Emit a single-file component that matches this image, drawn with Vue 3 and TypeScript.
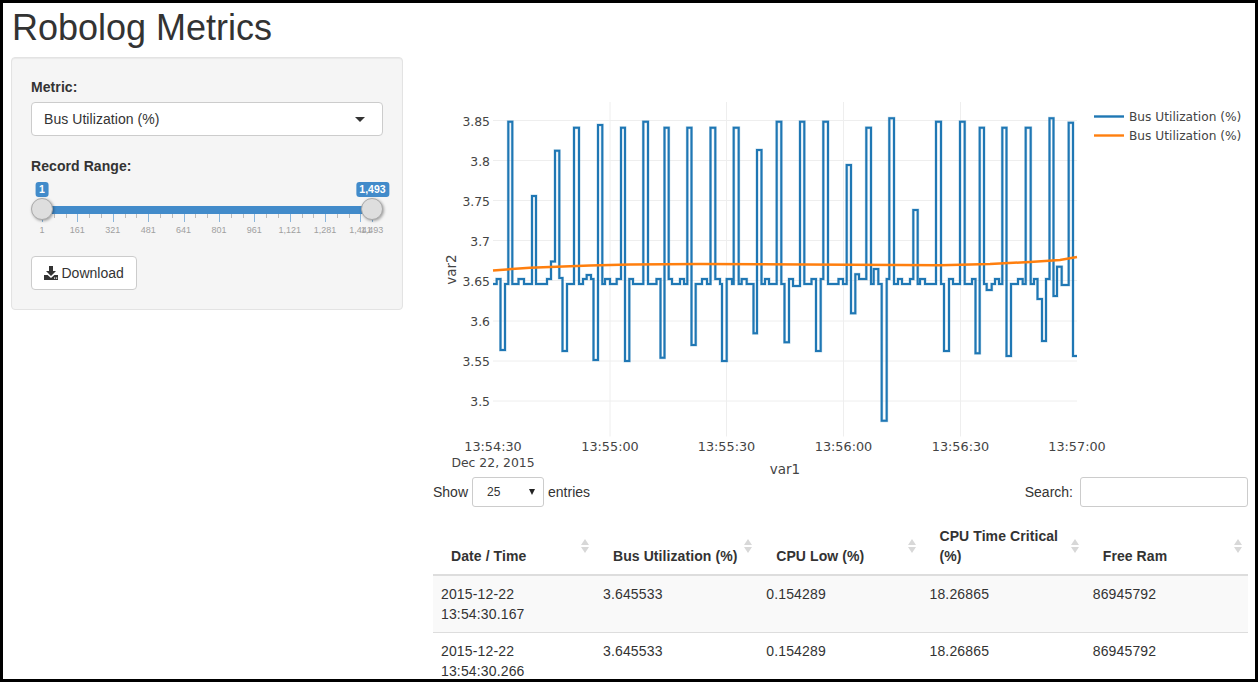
<script setup lang="ts">
// [x, level] pairs read off the chart, each one is a step of the blue trace
const steps: [number, number][] = [
  [496.7,279],[500.5,350],[505,284],[508.3,121.7],[512.3,284],[518.5,279],[524,284],[532,196],[536,284],
  [547,279],[551,261.6],[555,150.7],[559.3,278],[562.5,351],[567,284],[574,127.7],[579,284],[583,279],
  [586.7,275],[591,279],[593.5,360],[598,125],[602.3,284],[605,279],[610,284],[616.7,279],[621,127.7],
  [625,361],[629.3,279],[633,284],[643.3,121.7],[648,284],[656.5,279],[660.5,357.7],[664.5,127.7],
  [668.7,279],[672,284],[680,279],[684,284],[687.3,127.7],[691.5,345],[695.7,284],[702,279],[707,284],
  [710.5,127.7],[715.3,279],[720,284],[722,361],[726.7,279],[732,284],[733.7,127.7],[738.7,284],
  [741.7,279],[746.7,284],[753.5,333.3],[757,150],[761.5,284],[765,279],[769,284],[776.7,121.7],
  [781.3,284],[784.5,342.3],[789,279],[793,286],[800,121.7],[804.3,284],[811.5,279],[816,351],[820.7,279],
  [823.3,121.7],[828,284],[838.5,279],[843,284],[846.7,165],[851,313.3],[855.3,274.3],[859,279],
  [866.3,127.7],[871,284],[873.7,269],[878.3,284],[881.7,420.7],[886.7,279],[889.3,118.3],[894,284],
  [898,279],[902,284],[910,279],[913.3,210],[917.7,284],[920,279],[925,284],[936,121.7],[941,284],
  [944,351],[949,279],[953,284],[960,121.7],[964.7,284],[972,279],[975.5,353.3],[979.7,127.7],[984,284],
  [986.7,290],[991.7,284],[995,279],[999,284],[1002.3,127.7],[1006.5,356],[1011,284],[1018,279],
  [1022.7,284],[1025.7,127.7],[1030.7,284],[1034,279],[1037.5,299],[1042,341],[1046,279],[1049.5,118.3],
  [1053.5,296],[1057,266.7],[1061.7,285],[1068.7,122.7],[1073,356],
]
const bluePath = 'M493 284' + steps.map(([x, y]) => `H${x}V${y}`).join('') + 'H1077'
const orangePoints = '493,270.5 530,267.7 590,265.6 630,264.4 700,264 760,264.3 850,264.7 900,265 940,265.2 960,264.7 990,264 1030,262 1060,260 1077,257'

const yTicks = [
  { label: '3.85', y: 120.5 },
  { label: '3.8', y: 160.5 },
  { label: '3.75', y: 200.5 },
  { label: '3.7', y: 240.5 },
  { label: '3.65', y: 280.5 },
  { label: '3.6', y: 321 },
  { label: '3.55', y: 361 },
  { label: '3.5', y: 401 },
]
const xTicks = [
  { label: '13:54:30', x: 493 },
  { label: '13:55:00', x: 610 },
  { label: '13:55:30', x: 726.5 },
  { label: '13:56:00', x: 843.5 },
  { label: '13:56:30', x: 960.5 },
  { label: '13:57:00', x: 1077 },
]

// slider scale: 330px of travel over 1492 records
const sliderLabels = ['1', '161', '321', '481', '641', '801', '961', '1,121', '1,281', '1,441', '1,493']
const tickLeft = (v: number) => 11 + (v - 1) * 330 / 1492
const sliderValues = [1, 161, 321, 481, 641, 801, 961, 1121, 1281, 1441, 1493]
const minorValues: number[] = []
for (let v = 1; v < 1441; v += 160) minorValues.push(v + 160 / 3, v + 320 / 3)

const columns = ['Date / Time', 'Bus Utilization (%)', 'CPU Low (%)', 'CPU Time Critical (%)', 'Free Ram']
const rows = [
  ['2015-12-22 13:54:30.167', '3.645533', '0.154289', '18.26865', '86945792'],
  ['2015-12-22 13:54:30.266', '3.645533', '0.154289', '18.26865', '86945792'],
]
</script>

<template>
  <div class="page">
    <h2 class="title">Robolog Metrics</h2>
    <div class="layout">
      <aside class="panel">
        <div class="label">Metric:</div>
        <div class="select-box">
          <span>Bus Utilization (%)</span>
          <i class="caret"></i>
        </div>
        <div class="label range-label">Record Range:</div>
        <div class="slider">
          <div class="track"></div>
          <span class="badge badge-from">1</span>
          <span class="badge badge-to">1,493</span>
          <i
            v-for="v in minorValues"
            :key="v"
            class="tick minor"
            :style="{ left: tickLeft(v) + 'px' }"
          ></i>
          <i
            v-for="v in sliderValues"
            :key="v"
            class="tick major"
            :style="{ left: tickLeft(v) + 'px' }"
          ></i>
          <span
            v-for="(text, i) in sliderLabels"
            :key="text"
            class="tick-label"
            :style="{ left: tickLeft(sliderValues[i]) + 'px' }"
          >{{ text }}</span>
          <span class="handle handle-from"></span>
          <span class="handle handle-to"></span>
        </div>
        <button class="download" type="button">
          <svg width="14" height="14" viewBox="0 0 14 14">
            <path d="M5 0h4v5h3L7 10 2 5h3z" fill="#333" />
            <path d="M0 9h3.6L7 12l3.4-3H14v5H0z" fill="#333" />
            <rect x="10" y="11.5" width="1.2" height="1.2" fill="#fff" />
            <rect x="12" y="11.5" width="1.2" height="1.2" fill="#fff" />
          </svg>
          Download
        </button>
      </aside>

      <main class="content">
        <svg class="chart" width="822" height="420" viewBox="433 57 822 420">
          <g stroke="#eee" stroke-width="1">
            <line v-for="t in yTicks" :key="t.label" x1="493" x2="1077" :y1="t.y" :y2="t.y" />
            <line v-for="t in xTicks.slice(1, 5)" :key="t.label" :x1="t.x" :x2="t.x" y1="102" y2="436.5" />
          </g>
          <path :d="bluePath" fill="none" stroke="#1f77b4" stroke-width="3" opacity="0.3" />
          <path :d="bluePath" fill="none" stroke="#1f77b4" stroke-width="2" />
          <polyline :points="orangePoints" fill="none" stroke="#ff7f0e" stroke-width="2.5" />
          <g class="axis-text">
            <text v-for="t in yTicks" :key="t.label" class="y-tick" x="490" :y="t.y + 5" text-anchor="end">{{ t.label }}</text>
            <text v-for="t in xTicks" :key="t.label" :x="t.x" y="451" text-anchor="middle">{{ t.label }}</text>
            <text class="y-tick" x="493" y="467" text-anchor="middle">Dec 22, 2015</text>
            <text class="axis-title" x="785" y="474" text-anchor="middle">var1</text>
            <text class="axis-title" transform="translate(455.5 269.5) rotate(-90)" text-anchor="middle">var2</text>
          </g>
          <line x1="1094" x2="1124" y1="116.5" y2="116.5" stroke="#1f77b4" stroke-width="2.4" />
          <line x1="1094" x2="1124" y1="135.5" y2="135.5" stroke="#ff7f0e" stroke-width="2.4" />
          <g class="legend-text">
            <text x="1129" y="121">Bus Utilization (%)</text>
            <text x="1129" y="140">Bus Utilization (%)</text>
          </g>
        </svg>

        <div class="table-wrap">
          <div class="controls">
            <div class="length">
              Show
              <div class="mini-select">
                <span>25</span>
                <i class="mini-caret"></i>
              </div>
              entries
            </div>
            <label class="search">
              Search:
              <input type="text" />
            </label>
          </div>
          <table>
            <colgroup>
              <col class="first-col" />
              <col />
              <col />
              <col />
              <col />
            </colgroup>
            <thead>
              <tr>
                <th v-for="c in columns" :key="c">{{ c }}</th>
              </tr>
            </thead>
            <tbody>
              <tr v-for="(row, i) in rows" :key="i">
                <td v-for="(cell, j) in row" :key="j">{{ cell }}</td>
              </tr>
            </tbody>
          </table>
        </div>
      </main>
    </div>
  </div>
</template>

<style>
html, body {
  margin: 0;
  overflow: hidden;
}
</style>

<style scoped>
.page {
  box-sizing: border-box;
  width: 1258px;
  height: 682px;
  border: 3px solid #000;
  overflow: hidden;
  padding: 5px 0 0 8px;
  background: #fff;
  color: #333;
  font-family: "Liberation Sans", Arial, sans-serif;
  font-size: 14px;
  line-height: 20px;
}

.title {
  margin: 0 0 9px 1px;
  font-size: 36px;
  font-weight: 500;
  line-height: 40px;
}

.layout {
  display: grid;
  grid-template-columns: 392px 1fr;
  column-gap: 30px;
  align-items: start;
}

.panel {
  box-sizing: border-box;
  height: 253px;
  padding: 19px;
  background: #f5f5f5;
  border: 1px solid #e3e3e3;
  border-radius: 4px;
  box-shadow: inset 0 1px 1px rgba(0, 0, 0, 0.05);
}

.label {
  margin-bottom: 5px;
  font-weight: 700;
  letter-spacing: 0.08px;
}

.range-label {
  margin: 20px 0 0;
}

.select-box {
  box-sizing: border-box;
  height: 34px;
  padding: 0 12px;
  display: flex;
  align-items: center;
  justify-content: space-between;
  background: #fff;
  border: 1px solid #ccc;
  border-radius: 4px;
  letter-spacing: 0.06px;
}

.caret {
  width: 0;
  height: 0;
  margin-right: 5px;
  border-left: 5px solid transparent;
  border-right: 5px solid transparent;
  border-top: 5px solid #333;
}

.slider {
  position: relative;
  height: 65px;
  margin-bottom: 15px;
}

.track {
  position: absolute;
  top: 30px;
  left: 11px;
  width: 330px;
  height: 8px;
  background: #428bca;
}

.badge {
  position: absolute;
  top: 6px;
  height: 15px;
  padding: 0 3.5px;
  background: #428bca;
  border-radius: 3px;
  color: #fff;
  font-size: 10.5px;
  font-weight: 700;
  line-height: 15px;
  transform: translateX(-50%);
}

.badge-from {
  left: 11px;
}

.badge-to {
  left: 341.5px;
}

.tick {
  position: absolute;
  width: 1px;
}

.tick.major {
  top: 38px;
  height: 8px;
  background: #8ab6dc;
}

.tick.minor {
  top: 38px;
  height: 4px;
  background: #bbb;
}

.tick-label {
  position: absolute;
  top: 48px;
  color: #a0a0a0;
  font-size: 9px;
  line-height: 12px;
  transform: translateX(-50%);
}

.handle {
  position: absolute;
  top: 21.5px;
  box-sizing: border-box;
  width: 22px;
  height: 22px;
  margin-left: -11px;
  background: #dedede;
  border: 1px solid #aaa;
  border-radius: 50%;
  box-shadow: 1px 1px 3px rgba(0, 0, 0, 0.35);
}

.handle-from {
  left: 11px;
}

.handle-to {
  left: 341px;
}

.download {
  box-sizing: border-box;
  display: flex;
  align-items: center;
  gap: 3.5px;
  height: 34px;
  width: 106px;
  padding: 0 12px;
  background: #fff;
  border: 1px solid #ccc;
  border-radius: 4px;
  color: #333;
  font: inherit;
}

.content {
  min-width: 0;
}

.chart {
  display: block;
}

.axis-text text {
  fill: #444;
  font-family: "DejaVu Sans", Verdana, sans-serif;
  font-size: 12.8px;
}

.axis-text .y-tick {
  font-size: 12.4px;
}

.axis-text .axis-title {
  font-size: 13.5px;
}

.legend-text text {
  fill: #444;
  font-family: "DejaVu Sans", Verdana, sans-serif;
  font-size: 12.2px;
}

.table-wrap {
  width: 815px;
}

.controls {
  display: flex;
  align-items: center;
  justify-content: space-between;
  height: 30px;
  margin-bottom: 11px;
}

.length {
  display: flex;
  align-items: center;
  gap: 4px;
}

.mini-select {
  box-sizing: border-box;
  display: flex;
  align-items: center;
  justify-content: space-between;
  width: 72px;
  height: 30px;
  padding: 0 8px 0 14px;
  border: 1px solid #ccc;
  border-radius: 3px;
  font-size: 12px;
}

.mini-caret {
  width: 0;
  height: 0;
  border-left: 3.5px solid transparent;
  border-right: 3.5px solid transparent;
  border-top: 6px solid #222;
}

.search {
  display: flex;
  align-items: center;
  gap: 7px;
}

.search input {
  box-sizing: border-box;
  width: 168px;
  height: 30px;
  border: 1px solid #ccc;
  border-radius: 3px;
  outline: none;
}

table {
  width: 815px;
  table-layout: fixed;
  border-collapse: separate;
  border-spacing: 0;
}

.first-col {
  width: 162px;
}

th {
  position: relative;
  padding: 8px 18px 8px 18px;
  border-bottom: 2px solid #ddd;
  text-align: left;
  vertical-align: bottom;
  font-weight: 700;
  letter-spacing: 0.08px;
}

th::before,
th::after {
  content: "";
  position: absolute;
  right: 6px;
  width: 0;
  height: 0;
  border-left: 4px solid transparent;
  border-right: 4px solid transparent;
}

th::before {
  top: 21px;
  border-bottom: 6px solid #d8d8d8;
}

th::after {
  top: 29px;
  border-top: 6px solid #d8d8d8;
}

td {
  padding: 8px;
  vertical-align: top;
  border-bottom: 1px solid #ddd;
  letter-spacing: 0.15px;
}

tbody tr:nth-child(odd) td {
  background: #f9f9f9;
}
</style>
